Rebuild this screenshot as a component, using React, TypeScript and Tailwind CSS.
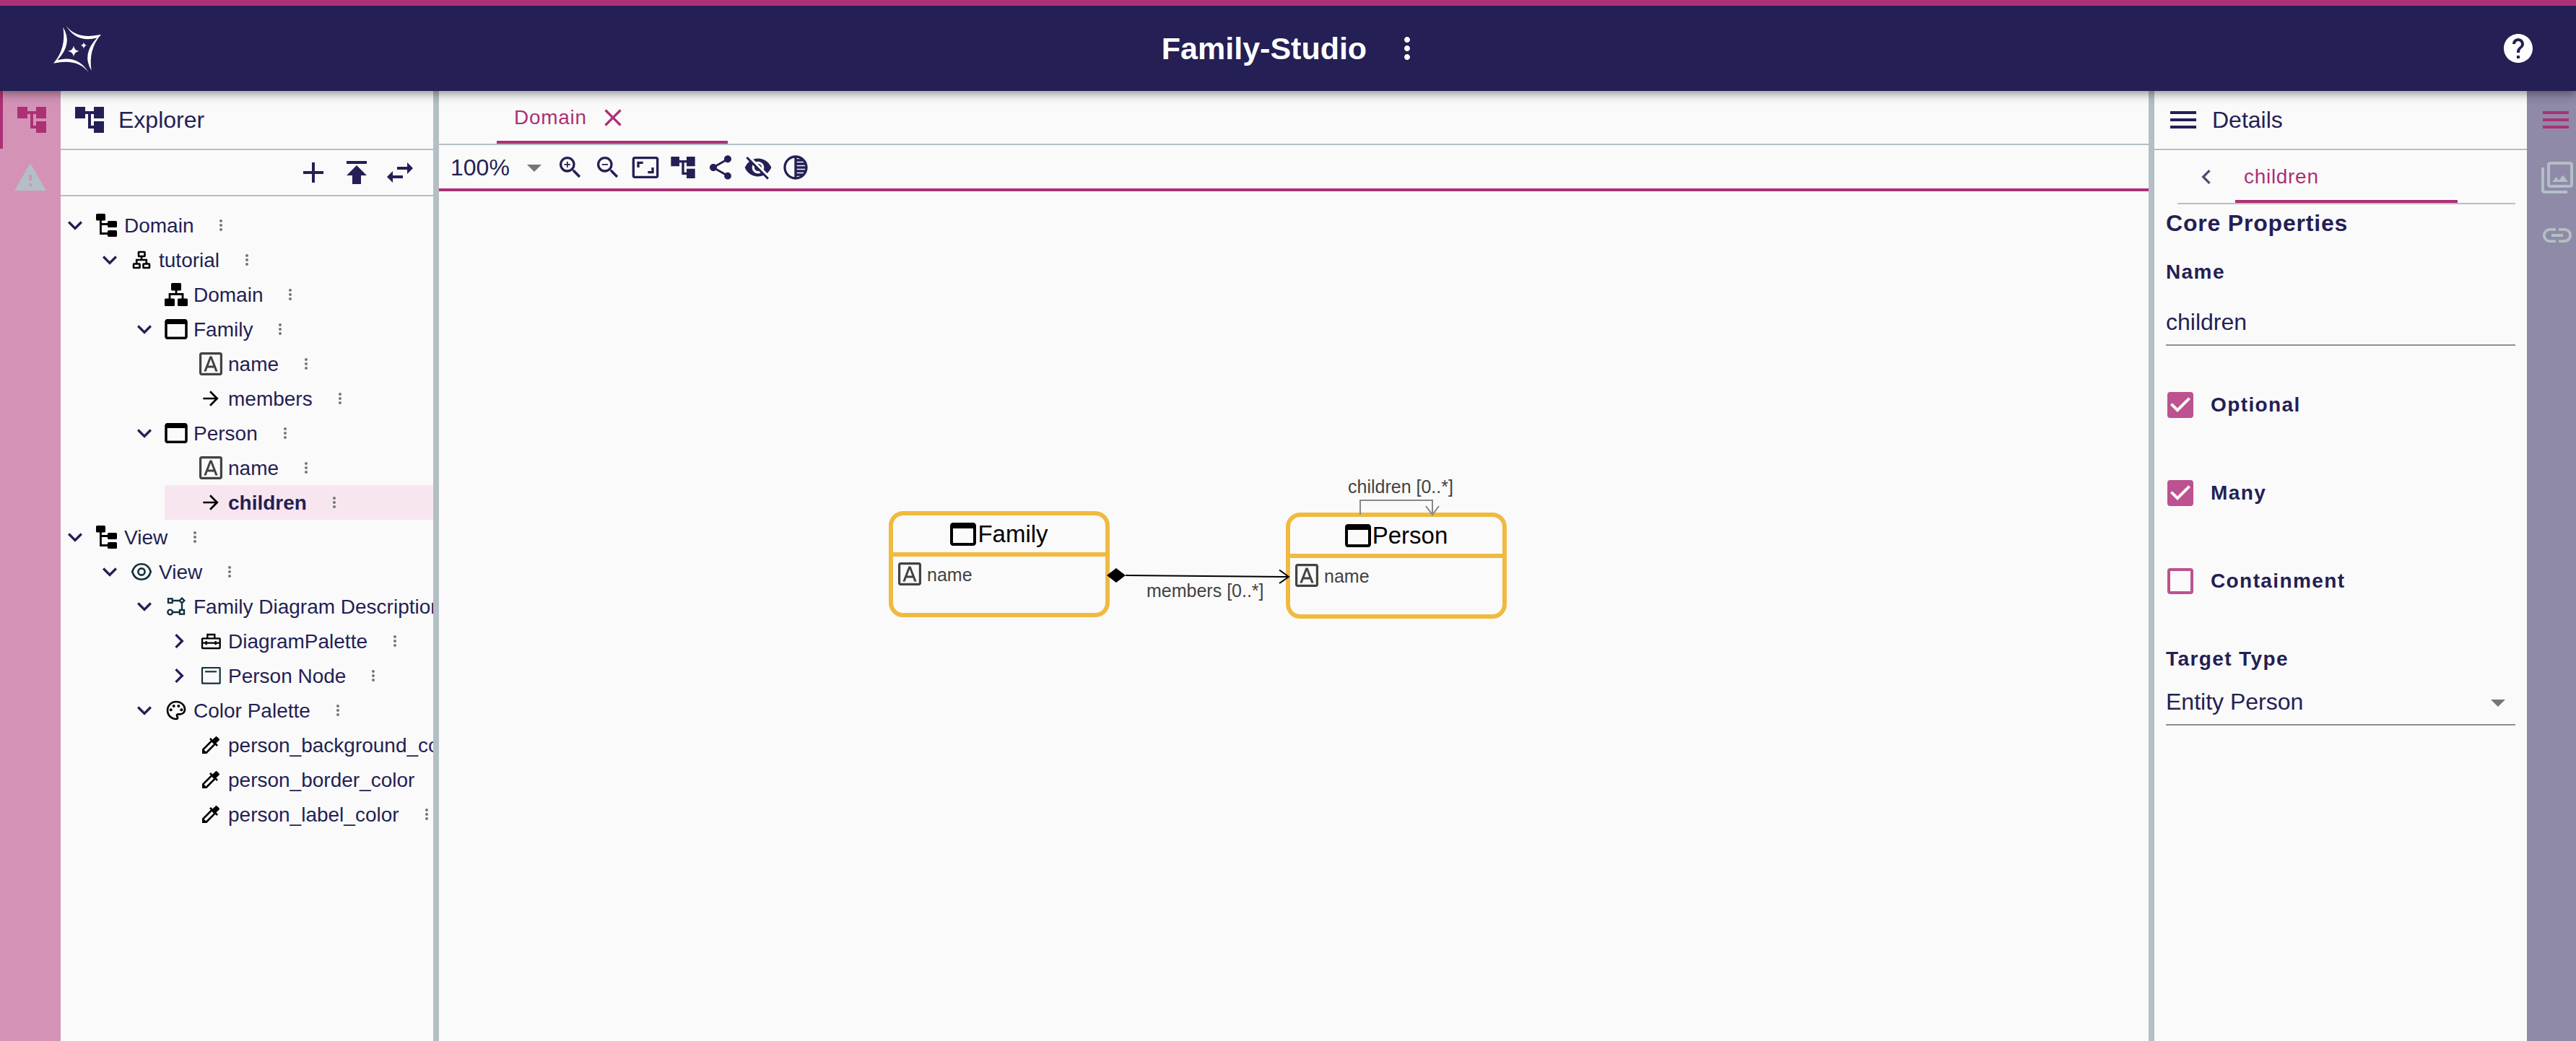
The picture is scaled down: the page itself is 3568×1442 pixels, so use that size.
import { useState } from "react";
import type { ReactNode } from "react";
import {
  MdAccountTree,
  MdAdd,
  MdArrowDropDown,
  MdArrowForward,
  MdAspectRatio,
  MdChevronRight,
  MdClose,
  MdColorize,
  MdExpandMore,
  MdFilter,
  MdHelp,
  MdKeyboardArrowLeft,
  MdLink,
  MdMenu,
  MdMoreVert,
  MdOutlineFontDownload,
  MdOutlinePalette,
  MdPublish,
  MdShare,
  MdSwapHoriz,
  MdTonality,
  MdVisibilityOff,
  MdWarning,
  MdZoomIn,
  MdZoomOut,
} from "react-icons/md";

/* ---------- icons ---------- */

function Logo() {
  const ribbon =
    "M76 30Q121 91 222 68Q168 130 182 218Q140 150 205 82Q119 104 76 30Z";
  return (
    <svg viewBox="18 24 210 206" className="h-[69px] w-[70px]" fill="#fff" role="img" aria-label="Home">
      <path d={ribbon} />
      <path d={ribbon} transform="rotate(180 123 128)" />
      <path d="M108 114Q111 134 131 137Q111 140 108 161Q105 140 84 137Q105 134 108 114Z" />
      <path d="M150 100Q152 111 163 113Q152 115 150 127Q148 115 137 113Q148 111 150 100Z" />
    </svg>
  );
}

function DocumentIcon() {
  return (
    <svg viewBox="0 0 32 32" className="size-8" fill="#000">
      <rect x="1" y="0" width="13" height="9.500" rx="1.500" />
      <rect x="17" y="10" width="13" height="9" rx="1.500" />
      <rect x="17" y="23" width="13" height="9" rx="1.500" />
      <path d="M7.500 8v19.500H18M7.500 14.500H18" fill="none" stroke="#000" strokeWidth="2.800" />
    </svg>
  );
}

function PackageIcon() {
  return (
    <svg viewBox="0 0 32 32" className="size-8" fill="none" stroke="#000" strokeWidth="2.600">
      <rect x="12" y="5" width="8.500" height="6" rx=".6" />
      <rect x="5" y="21.500" width="8.500" height="5.500" rx=".6" />
      <rect x="18.500" y="21.500" width="8.500" height="5.500" rx=".6" />
      <path d="M16 11v5M9.200 21v-5h13.600v5" />
    </svg>
  );
}

function DomainIcon() {
  return (
    <svg viewBox="0 0 32 32" className="size-8" fill="#000">
      <rect x="9" y="0" width="14" height="10.500" rx="1.500" />
      <rect x="0" y="21.500" width="14" height="10.500" rx="1.500" />
      <rect x="18" y="21.500" width="14" height="10.500" rx="1.500" />
      <path d="M16 10v5.500M7 22v-6.500h18V22" fill="none" stroke="#000" strokeWidth="2.800" />
    </svg>
  );
}

function EntityIcon({ className = "h-7 w-8" }: { className?: string }) {
  return (
    <svg viewBox="3 4 18 16" className={className} fill="#000">
      <path d="M19 4H5c-1.110 0-2 .9-2 2v12c0 1.100.89 2 2 2h14c1.100 0 2-.9 2-2V6c0-1.100-.89-2-2-2zm0 14H5V8h14v10z" />
    </svg>
  );
}

function AttributeIcon() {
  return <MdOutlineFontDownload viewBox="2 2 20 20" className="size-8 shrink-0 text-[#424242]" />;
}

function ViewIcon() {
  return (
    <svg viewBox="0 0 32 32" className="size-8" fill="none" stroke="#12303f" strokeWidth="2.600">
      <path d="M3.200 16C5.500 8.500 10.500 5.200 16 5.200S26.500 8.500 28.800 16C26.500 23.500 21.500 26.800 16 26.800S5.500 23.500 3.200 16Z" />
      <circle cx="16" cy="16" r="4.600" />
    </svg>
  );
}

function DiagramIcon() {
  return (
    <svg viewBox="0 0 96 96" className="size-8" fill="none" stroke="#12303f" strokeWidth="7">
      <rect x="15" y="16" width="17" height="17" />
      <path d="M72 14l10 10-10 10-10-10z" />
      <circle cx="23" cy="72" r="10" />
      <rect x="63" y="63" width="18" height="17" />
      <path d="M34 24h28M72 35v27M34 72h28" />
    </svg>
  );
}

function ToolboxIcon() {
  return (
    <svg viewBox="0 0 96 96" className="size-8" fill="none" stroke="#000" strokeWidth="7">
      <rect x="12" y="37" width="74" height="41" rx="2" />
      <path d="M34 36V21h30v15M12 56h74M29 48v16M68 48v16" />
    </svg>
  );
}

function NodeIcon() {
  return (
    <svg viewBox="0 0 96 96" className="size-8" fill="none" stroke="#12303f" strokeWidth="6.500">
      <rect x="12" y="15" width="74" height="65" rx="1" />
      <path d="M24 31h48" />
    </svg>
  );
}

/* ---------- explorer ---------- */

type TreeRow = {
  label: string;
  depth: 0 | 1 | 2 | 3;
  icon: ReactNode;
  state?: "open" | "closed";
  selected?: boolean;
};

const arrow = <MdArrowForward className="size-8" />;
const picker = <MdColorize className="size-8" />;

const rows: TreeRow[] = [
  { label: "Domain", depth: 0, icon: <DocumentIcon />, state: "open" },
  { label: "tutorial", depth: 1, icon: <PackageIcon />, state: "open" },
  { label: "Domain", depth: 2, icon: <DomainIcon /> },
  { label: "Family", depth: 2, icon: <EntityIcon />, state: "open" },
  { label: "name", depth: 3, icon: <AttributeIcon /> },
  { label: "members", depth: 3, icon: arrow },
  { label: "Person", depth: 2, icon: <EntityIcon />, state: "open" },
  { label: "name", depth: 3, icon: <AttributeIcon /> },
  { label: "children", depth: 3, icon: arrow, selected: true },
  { label: "View", depth: 0, icon: <DocumentIcon />, state: "open" },
  { label: "View", depth: 1, icon: <ViewIcon />, state: "open" },
  { label: "Family Diagram Description", depth: 2, icon: <DiagramIcon />, state: "open" },
  { label: "DiagramPalette", depth: 3, icon: <ToolboxIcon />, state: "closed" },
  { label: "Person Node", depth: 3, icon: <NodeIcon />, state: "closed" },
  { label: "Color Palette", depth: 2, icon: <MdOutlinePalette className="size-8" />, state: "open" },
  { label: "person_background_color", depth: 3, icon: picker },
  { label: "person_border_color", depth: 3, icon: picker },
  { label: "person_label_color", depth: 3, icon: picker },
];

const indent = ["ml-0", "ml-12", "ml-24", "ml-36"];

function TreeItem({ row }: { row: TreeRow }) {
  return (
    <li
      role="treeitem"
      aria-level={row.depth + 1}
      aria-selected={!!row.selected}
      className={`flex h-12 items-center whitespace-nowrap ${indent[row.depth]} ${row.selected ? "bg-[#f7e6f0] font-bold" : ""}`}
    >
      {row.state ? (
        <button aria-label={row.state === "open" ? "Collapse" : "Expand"} className="size-10 shrink-0">
          {row.state === "open" ? <MdExpandMore className="size-10" /> : <MdChevronRight className="size-10" />}
        </button>
      ) : (
        <span className="w-10 shrink-0" />
      )}
      <span className="ml-2 flex size-8 shrink-0 items-center justify-center text-black">{row.icon}</span>
      <span className="ml-2 pt-0.5 text-[28px] leading-8">{row.label}</span>
      <button aria-label={`${row.label} actions`} className="ml-[26px] shrink-0 text-[#757575]">
        <MdMoreVert className="size-6" />
      </button>
    </li>
  );
}

function Explorer() {
  return (
    <aside className="flex w-[516px] shrink-0 flex-col overflow-hidden">
      <PanelTitle icon={<MdAccountTree className="size-12" />} title="Explorer" />
      <div className="flex h-16 items-center justify-end gap-3 border-b-2 border-[#b3bfc5] pr-[22px]">
        <button aria-label="New model"><MdAdd className="size-12" /></button>
        <button aria-label="Upload model"><MdPublish className="size-12" /></button>
        <button aria-label="Synchronize selection"><MdSwapHoriz className="size-12" /></button>
      </div>
      <ul role="tree" aria-label="Explorer" className="pt-4">
        {rows.map((row, i) => (
          <TreeItem key={i} row={row} />
        ))}
      </ul>
    </aside>
  );
}

function PanelTitle({ icon, title }: { icon: ReactNode; title: string }) {
  return (
    <div className="flex h-[82px] items-center gap-4 border-b-2 border-[#b3bfc5] px-4">
      {icon}
      <h2 className="text-[32px] leading-10">{title}</h2>
    </div>
  );
}

function Divider() {
  return <div className="w-2 shrink-0 bg-[#b3bfc5]" />;
}

/* ---------- editor ---------- */

function DiagramNode({ name, className }: { name: string; className: string }) {
  return (
    <div className={`absolute h-[147px] w-[306px] rounded-[20px] border-6 border-[#f0ba40] ${className}`}>
      <div className="flex h-[57px] items-center justify-center gap-0.5 border-b-6 border-[#f0ba40] text-[33px] leading-10 text-black">
        <EntityIcon className="h-8 w-9" />
        {name}
      </div>
      <div className="flex items-center gap-2 px-[7px] pt-[7px] text-[25px] leading-8 text-[#424242]">
        <AttributeIcon />
        <span className="pt-0.5">name</span>
      </div>
    </div>
  );
}

function Canvas() {
  return (
    <div className="relative flex-1 overflow-hidden text-[#424242]">
      <DiagramNode name="Family" className="left-[623px] top-[443px]" />
      <DiagramNode name="Person" className="left-[1173px] top-[445px]" />
      <svg width="1500" height="640" className="absolute left-0 top-0" fill="none" strokeWidth="2">
        <path d="M951 532L1177 534" stroke="#000" />
        <path d="M1164 524.500L1177 534L1164 543" stroke="#000" />
        <path d="M925 532L938 522L951 532L938 542Z" fill="#000" />
        <path d="M1276 448V428H1376V448M1367 436L1376 448L1385 436" stroke="#888" />
      </svg>
      <span className="absolute left-[980px] top-[537px] whitespace-nowrap text-[25px] leading-8">members [0..*]</span>
      <span className="absolute left-[1259px] top-[393px] whitespace-nowrap text-[25px] leading-8">children [0..*]</span>
    </div>
  );
}

const tools = [
  { label: "Zoom in", Icon: MdZoomIn },
  { label: "Zoom out", Icon: MdZoomOut },
  { label: "Fit to screen", Icon: MdAspectRatio },
  { label: "Arrange all", Icon: MdAccountTree },
  { label: "Share", Icon: MdShare },
  { label: "Hide elements", Icon: MdVisibilityOff },
  { label: "Fade elements", Icon: MdTonality },
];

function Editor() {
  return (
    <main className="flex min-w-0 flex-1 flex-col">
      <div role="tablist" className="flex h-[75px] border-b-2 border-[#b3bfc5] pl-20">
        <div className="flex w-80 items-center gap-4 border-b-4 border-[#ac3075] px-6 pt-1 text-[#ac3075]">
          <button role="tab" aria-selected="true" className="text-[28px] leading-8 tracking-wide">Domain</button>
          <button aria-label="Close Domain"><MdClose className="size-10" /></button>
        </div>
      </div>
      <div className="flex h-16 items-center gap-1.5 border-b-4 border-[#ac3075] pl-4 pt-0.5">
        <div className="relative flex items-center">
          <select aria-label="Zoom level" className="w-[140px] appearance-none bg-transparent text-[32px] leading-10">
            <option>100%</option>
          </select>
          <MdArrowDropDown className="pointer-events-none absolute right-0 size-12 text-[#757575]" />
        </div>
        <div className="flex items-center gap-3">
          {tools.map(({ label, Icon }) => (
            <button key={label} aria-label={label}>
              <Icon className="size-10" />
            </button>
          ))}
        </div>
      </div>
      <Canvas />
    </main>
  );
}

/* ---------- details ---------- */

const fieldLabel = "text-[28px] font-bold leading-8 tracking-wider";

function CheckField({ id, label, initial = false }: { id: string; label: string; initial?: boolean }) {
  const [checked, setChecked] = useState(initial);
  return (
    <div className="flex h-12 items-center">
      <span className="relative -ml-1 grid size-12 place-items-center">
        <input
          id={id}
          type="checkbox"
          checked={checked}
          onChange={(e) => setChecked(e.target.checked)}
          className="peer size-9 appearance-none rounded-[4px] border-4 border-[#bc528f] checked:bg-[#bc528f]"
        />
        <svg
          viewBox="3 3 18 18"
          fill="#fafafa"
          className="pointer-events-none invisible absolute size-9 peer-checked:visible"
        >
          <path d="M10 17l-5-5 1.410-1.410L10 14.170l7.590-7.590L19 8l-9 9z" />
        </svg>
      </span>
      <label htmlFor={id} className={`ml-[18px] ${fieldLabel}`}>{label}</label>
    </div>
  );
}

function Details() {
  return (
    <aside className="flex w-[516px] shrink-0 flex-col">
      <PanelTitle icon={<MdMenu className="size-12" />} title="Details" />
      <div role="tablist" className="ml-8 mr-4 flex h-[75px] border-b-2 border-[#b3bfc5] text-[#ac3075]">
        <button aria-label="Previous tabs" className="flex w-20 items-center justify-center text-[#241f54]/80">
          <MdKeyboardArrowLeft className="size-10" />
        </button>
        <button
          role="tab"
          aria-selected="true"
          className="w-[308px] border-b-4 border-[#ac3075] px-3 pt-1 text-left text-[28px] leading-8 tracking-wide"
        >
          children
        </button>
      </div>
      <form className="flex flex-col px-4 pt-1.5">
        <h3 className="text-[32px] font-bold leading-10 tracking-wide">Core Properties</h3>
        <label htmlFor="name" className={`mt-8 ${fieldLabel}`}>Name</label>
        <input
          id="name"
          type="text"
          defaultValue="children"
          className="mt-[22px] h-16 w-full border-b-2 border-[#8f8f8f] bg-transparent text-[32px] outline-none"
        />
        <div className="mt-[58px] flex flex-col gap-[74px]">
          <CheckField id="optional" label="Optional" initial />
          <CheckField id="many" label="Many" initial />
          <CheckField id="containment" label="Containment" />
        </div>
        <label htmlFor="target" className={`mt-[68px] ${fieldLabel}`}>Target Type</label>
        <div className="relative mt-3 flex items-center">
          <select
            id="target"
            className="h-16 w-full appearance-none border-b-2 border-[#8f8f8f] bg-transparent text-[32px] outline-none"
          >
            <option>Entity Person</option>
          </select>
          <MdArrowDropDown className="pointer-events-none absolute right-0 size-12 text-[#757575]" />
        </div>
      </form>
    </aside>
  );
}

/* ---------- page ---------- */

export default function App() {
  return (
    <div className="flex min-h-screen flex-col bg-[#fafafa] font-['Liberation_Sans',Arial,sans-serif] text-[#241f54]">
      <header className="relative z-10 flex h-[126px] items-center justify-between border-t-8 border-[#ac3075] bg-[#241f54] pl-[72px] pr-11 text-white shadow-[0_4px_8px_-2px_rgba(0,0,0,0.2),0_8px_10px_0_rgba(0,0,0,0.14),0_2px_20px_0_rgba(0,0,0,0.12)]">
        <a href="#home"><Logo /></a>
        <div className="flex items-center gap-5">
          <h1 className="text-[43px] font-bold leading-12">Family-Studio</h1>
          <button aria-label="More" className="p-3"><MdMoreVert className="size-12" /></button>
        </div>
        <button aria-label="Help" className="p-3"><MdHelp className="size-12" /></button>
      </header>
      <div className="flex flex-1">
        <nav aria-label="Left views" className="flex w-[84px] shrink-0 flex-col bg-[#d493b6]">
          <button aria-label="Explorer" className="flex h-20 items-center justify-center border-l-4 border-[#ac3075] text-[#ac3075]">
            <MdAccountTree className="size-12" />
          </button>
          <button aria-label="Validation" className="flex h-20 items-center justify-center text-[#b3bfc5]">
            <MdWarning className="size-12" />
          </button>
        </nav>
        <Explorer />
        <Divider />
        <Editor />
        <Divider />
        <Details />
        <nav aria-label="Right views" className="flex w-[68px] shrink-0 flex-col bg-[#8f8aa8] text-[#b3bfc5]">
          <button aria-label="Details" className="flex h-20 items-center pl-4 text-[#ac3075]">
            <MdMenu className="size-12" />
          </button>
          <button aria-label="Representations" className="flex h-20 items-center pl-[18px]">
            <MdFilter className="size-12" />
          </button>
          <button aria-label="Related elements" className="flex h-20 items-center pl-[18px]">
            <MdLink className="size-12" />
          </button>
        </nav>
      </div>
    </div>
  );
}
